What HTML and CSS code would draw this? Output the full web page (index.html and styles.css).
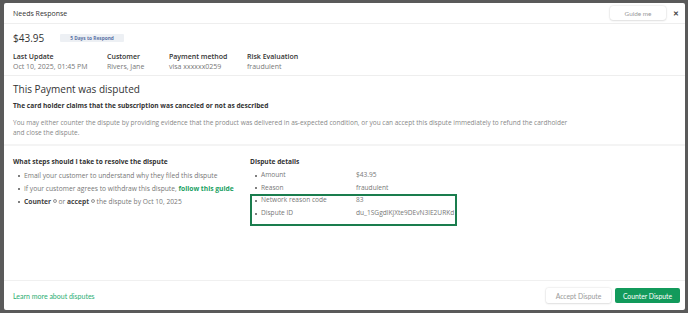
FILE: index.html
```html
<!DOCTYPE html>
<html>
<head>
<meta charset="utf-8">
<link rel="stylesheet" href="styles.css">
</head>
<body>
<div class="modal">
  <div class="header">
    <span class="header-title">Needs Response</span>
    <div class="header-actions">
      <button class="guide">Guide me</button>
      <span class="close">&#x2715;</span>
    </div>
  </div>
  <div class="summary">
    <div class="amount-row">
      <span class="amount">$43.95</span>
      <span class="badge">5 Days to Respond</span>
    </div>
    <div class="meta">
      <div><div class="meta-label">Last Update</div><div class="meta-value">Oct 10, 2025, 01:45 PM</div></div>
      <div><div class="meta-label">Customer</div><div class="meta-value">Rivers, Jane</div></div>
      <div><div class="meta-label">Payment method</div><div class="meta-value">visa xxxxxx0259</div></div>
      <div><div class="meta-label">Risk Evaluation</div><div class="meta-value">fraudulent</div></div>
    </div>
  </div>
  <div class="intro">
    <h1 class="title">This Payment was disputed</h1>
    <p class="claim">The card holder claims that the subscription was canceled or not as described</p>
    <p class="desc">You may either counter the dispute by providing evidence that the product was delivered in as-expected condition, or you can accept this dispute immediately to refund the cardholder and close the dispute.</p>
  </div>
  <div class="details">
    <div class="steps">
      <div class="sub-title">What steps should I take to resolve the dispute</div>
      <ul class="list">
        <li>Email your customer to understand why they filed this dispute</li>
        <li>If your customer agrees to withdraw this dispute, <a class="guide-link">follow this guide</a></li>
        <li><b>Counter</b> <span class="q">?</span> or <b>accept</b> <span class="q">?</span> the dispute by Oct 10, 2025</li>
      </ul>
    </div>
    <div class="dispute">
      <div class="sub-title">Dispute details</div>
      <ul class="list kv">
        <li><span class="k">Amount</span><span>$43.95</span></li>
        <li><span class="k">Reason</span><span>fraudulent</span></li>
        <li><span class="k">Network reason code</span><span>83</span></li>
        <li><span class="k">Dispute ID</span><span>du_1SGgdlKjXte9DEvN3lE2URKd</span></li>
      </ul>
      <div class="highlight"></div>
    </div>
  </div>
  <div class="footer">
    <a class="learn">Learn more about disputes</a>
    <div class="footer-actions">
      <button class="btn accept">Accept Dispute</button>
      <button class="btn counter">Counter Dispute</button>
    </div>
  </div>
</div>
</body>
</html>
```
FILE: styles.css
```css
* { box-sizing: border-box; }
html, body { margin: 0; padding: 0; }
body {
  width: 688px;
  height: 313px;
  background: #5a5a5a;
  font-family: "Open Sans", "Liberation Sans", sans-serif;
  overflow: hidden;
  padding: 3px 3px 3px 4px;
}
.modal {
  background: #fff;
  height: 307px;
  border-radius: 2px;
  display: flex;
  flex-direction: column;
  overflow: hidden;
}
.header {
  height: 21px;
  flex: none;
  display: flex;
  align-items: center;
  justify-content: space-between;
  padding: 0 6px 0 9px;
  border-bottom: 1px solid #eeeeee;
}
.header-title { font-size: 7px; color: #333; }
.header-actions { display: flex; align-items: center; gap: 7px; }
.guide {
  width: 56px;
  height: 14px;
  border: none;
  background: #fff;
  border-radius: 3px;
  box-shadow: 0 0 2px rgba(0,0,0,0.18), 0 1px 2px rgba(0,0,0,0.08);
  font-family: Lato, "Liberation Sans", sans-serif;
  font-size: 6.4px;
  color: #999;
  padding: 0;
}
.close { font-size: 6.5px; color: #444; font-weight: bold; }
.summary {
  flex: none;
  padding: 7px 9px 3px;
  border-bottom: 1px solid #eeeeee;
}
.amount-row { height: 14px; display: flex; align-items: center; }
.amount { font-size: 10px; color: #333; width: 47px; }
.badge {
  width: 64px;
  height: 8px;
  line-height: 8px;
  background: #edf0f4;
  color: #5b72a6;
  font-size: 4.8px;
  font-weight: 700;
  text-align: center;
  border-radius: 1px;
}
.meta {
  margin-top: 7px;
  display: grid;
  grid-template-columns: 94px 62px 78px auto;
}
.meta-label { font-size: 7px; font-weight: 600; color: #333; line-height: 10px; }
.meta-value { font-size: 7px; color: #777; line-height: 10px; }
.intro {
  flex: none;
  padding: 6px 9px 6px;
  border-bottom: 2px solid #f4f4f4;
}
.title { margin: 0; font-size: 10px; font-weight: 400; color: #333; line-height: 14px; }
.claim { margin: 5px 0 0; font-size: 6.6px; font-weight: 700; color: #333; line-height: 10px; }
.desc { margin: 7px 0 0; font-size: 6.5px; color: #888; line-height: 10px; width: 560px; }
.details {
  flex: 1;
  display: flex;
  padding: 11px 9px 0;
  border-bottom: 1px solid #f0f0f0;
}
.steps { width: 237px; }
.dispute { position: relative; width: 220px; }
.sub-title { font-size: 6.6px; font-weight: 700; color: #333; line-height: 10px; }
.list {
  list-style: none;
  margin: 2px 0 0;
  padding: 0 0 0 11px;
  font-size: 6.7px;
  color: #777;
}
.list li { height: 13px; line-height: 13px; position: relative; white-space: nowrap; }
.list li::before {
  content: "";
  position: absolute;
  left: -6px;
  top: 5.5px;
  width: 2px;
  height: 2px;
  border-radius: 50%;
  background: #555;
}
.list b { color: #444; font-weight: 700; }
.guide-link { color: #18a062; font-weight: 700; }
.q {
  display: inline-block;
  width: 4px;
  height: 4px;
  line-height: 4px;
  border: 0.5px solid #999;
  border-radius: 50%;
  font-size: 3px;
  text-align: center;
  color: #999;
  vertical-align: 1px;
}
.kv { padding-left: 11px; font-size: 6.6px; }
.kv li { height: 12.7px; line-height: 12.7px; display: flex; }
.kv .k { width: 95px; }
.highlight {
  position: absolute;
  left: 0;
  top: 37px;
  width: 207px;
  height: 32px;
  border: 2px solid #1a7d4e;
}
.footer {
  flex: none;
  height: 29px;
  display: flex;
  align-items: center;
  justify-content: space-between;
  padding: 0 5px 0 9px;
}
.learn {
  font-family: Lato, "Liberation Sans", sans-serif;
  font-size: 7px;
  color: #2aae72;
}
.footer-actions { display: flex; gap: 4px; }
.btn {
  width: 65px;
  height: 15px;
  border: none;
  border-radius: 2px;
  font-family: Lato, "Liberation Sans", sans-serif;
  font-size: 6.8px;
  padding: 0;
}
.accept {
  background: #fff;
  color: #999;
  box-shadow: 0 0 2px rgba(0,0,0,0.18), 0 1px 2px rgba(0,0,0,0.08);
}
.counter { background: #129a5b; color: #fff; }
```
